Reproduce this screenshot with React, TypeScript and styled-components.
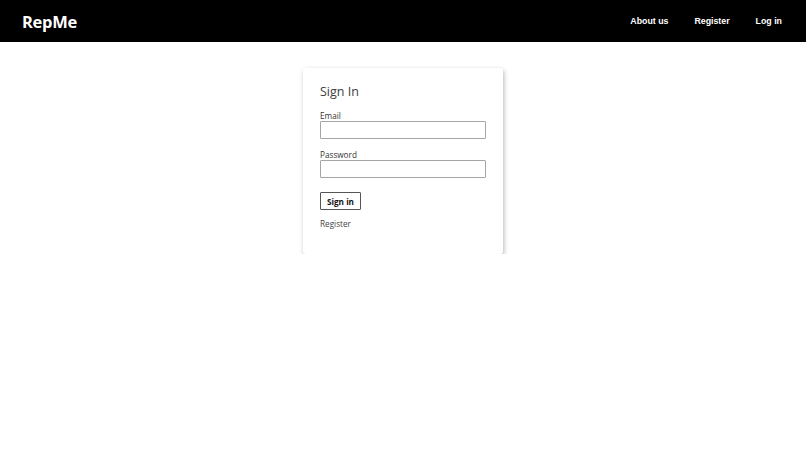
import styled, { createGlobalStyle } from "styled-components";

const GlobalStyle = createGlobalStyle`
  body {
    margin: 0;
    background: #ffffff;
    font-family: "Open Sans", "Noto Sans", sans-serif;
  }
`;

export default function App() {
  return (
    <>
      <GlobalStyle />
      <Header>
        <Logo>RepMe</Logo>
        <NavList>
          <NavItem>About us</NavItem>
          <NavItem>Register</NavItem>
          <NavItem>Log in</NavItem>
        </NavList>
      </Header>
      <Main>
        <Card>
          <Title>Sign In</Title>
          <Field>
            <Label>Email</Label>
            <Input type="email" />
          </Field>
          <Field>
            <Label>Password</Label>
            <Input type="password" />
          </Field>
          <SubmitButton>Sign in</SubmitButton>
          <RegisterLink>Register</RegisterLink>
        </Card>
      </Main>
    </>
  );
}

const Header = styled.header`
  height: 42px;
  background: #000;
  display: flex;
  align-items: center;
  justify-content: space-between;
  padding: 0 24px 0 22px;
`;

const Logo = styled.div`
  color: #fff;
  font-family: "Open Sans", sans-serif;
  font-weight: 700;
  font-size: 16.5px;
  letter-spacing: -0.3px;
  margin-top: 1px;
`;

const NavList = styled.nav`
  display: flex;
  gap: 26px;
`;

const NavItem = styled.a`
  color: #fff;
  font-family: "Liberation Sans", Arial, sans-serif;
  font-weight: 700;
  font-size: 8.8px;
  margin-top: -1px;
`;

const Main = styled.main`
  display: flex;
  justify-content: center;
  padding-top: 26px;
`;

const Card = styled.div`
  width: 200px;
  box-sizing: border-box;
  padding: 15px 17px 25px;
  background: #fff;
  border-radius: 3px;
  box-shadow: 1px 2px 5px rgba(0, 0, 0, 0.28);
  display: flex;
  flex-direction: column;
  align-items: flex-start;
`;

const Title = styled.h1`
  margin: 0 0 10px;
  font-size: 12.5px;
  line-height: 17px;
  font-weight: 400;
  color: #3d3d3d;
`;

const Field = styled.div`
  display: flex;
  flex-direction: column;
  width: 100%;
  margin-bottom: 10px;
`;

const Label = styled.label`
  font-size: 8.2px;
  line-height: 11px;
  color: #333;
`;

const Input = styled.input`
  box-sizing: border-box;
  width: 166px;
  height: 18px;
  border: 1px solid #a5a5a5;
  border-radius: 1px;
  margin: 0;
`;

const SubmitButton = styled.button`
  margin-top: 4px;
  box-sizing: border-box;
  width: 41px;
  height: 18px;
  padding: 0;
  background: #fff;
  border: 1px solid #555;
  border-radius: 1px;
  font-family: "Open Sans", sans-serif;
  font-weight: 700;
  font-size: 8.2px;
  color: #111;
`;

const RegisterLink = styled.a`
  margin-top: 8px;
  font-size: 8.2px;
  line-height: 11px;
  color: #444;
`;
